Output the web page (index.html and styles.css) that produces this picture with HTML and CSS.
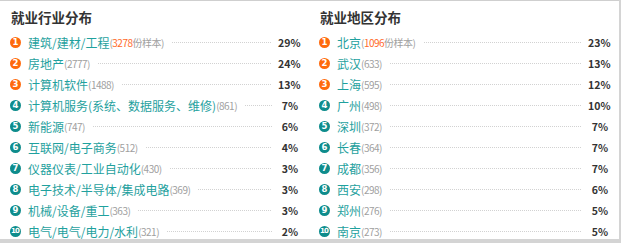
FILE: index.html
```html
<!DOCTYPE html>
<html lang="zh-CN">
<head>
<meta charset="utf-8">
<link rel="stylesheet" href="styles.css">
</head>
<body>
<div class="card">
  <section class="col">
    <h2 class="title">就业行业分布</h2>
    <ul class="list">
      <li class="row"><span class="num hot">1</span><span class="label">建筑/建材/工程</span><span class="count">(<em>3278</em>份样本)</span><span class="dots"></span><span class="pct">29%</span></li>
      <li class="row"><span class="num hot">2</span><span class="label">房地产</span><span class="count">(2777)</span><span class="dots"></span><span class="pct">24%</span></li>
      <li class="row"><span class="num hot">3</span><span class="label">计算机软件</span><span class="count">(1488)</span><span class="dots"></span><span class="pct">13%</span></li>
      <li class="row"><span class="num">4</span><span class="label">计算机服务(系统、数据服务、维修)</span><span class="count">(861)</span><span class="dots"></span><span class="pct">7%</span></li>
      <li class="row"><span class="num">5</span><span class="label">新能源</span><span class="count">(747)</span><span class="dots"></span><span class="pct">6%</span></li>
      <li class="row"><span class="num">6</span><span class="label">互联网/电子商务</span><span class="count">(512)</span><span class="dots"></span><span class="pct">4%</span></li>
      <li class="row"><span class="num">7</span><span class="label">仪器仪表/工业自动化</span><span class="count">(430)</span><span class="dots"></span><span class="pct">3%</span></li>
      <li class="row"><span class="num">8</span><span class="label">电子技术/半导体/集成电路</span><span class="count">(369)</span><span class="dots"></span><span class="pct">3%</span></li>
      <li class="row"><span class="num">9</span><span class="label">机械/设备/重工</span><span class="count">(363)</span><span class="dots"></span><span class="pct">3%</span></li>
      <li class="row"><span class="num small">10</span><span class="label">电气/电气/电力/水利</span><span class="count">(321)</span><span class="dots"></span><span class="pct">2%</span></li>
    </ul>
  </section>
  <section class="col">
    <h2 class="title">就业地区分布</h2>
    <ul class="list">
      <li class="row"><span class="num hot">1</span><span class="label">北京</span><span class="count">(<em>1096</em>份样本)</span><span class="dots"></span><span class="pct">23%</span></li>
      <li class="row"><span class="num hot">2</span><span class="label">武汉</span><span class="count">(633)</span><span class="dots"></span><span class="pct">13%</span></li>
      <li class="row"><span class="num hot">3</span><span class="label">上海</span><span class="count">(595)</span><span class="dots"></span><span class="pct">12%</span></li>
      <li class="row"><span class="num">4</span><span class="label">广州</span><span class="count">(498)</span><span class="dots"></span><span class="pct">10%</span></li>
      <li class="row"><span class="num">5</span><span class="label">深圳</span><span class="count">(372)</span><span class="dots"></span><span class="pct">7%</span></li>
      <li class="row"><span class="num">6</span><span class="label">长春</span><span class="count">(364)</span><span class="dots"></span><span class="pct">7%</span></li>
      <li class="row"><span class="num">7</span><span class="label">成都</span><span class="count">(356)</span><span class="dots"></span><span class="pct">7%</span></li>
      <li class="row"><span class="num">8</span><span class="label">西安</span><span class="count">(298)</span><span class="dots"></span><span class="pct">6%</span></li>
      <li class="row"><span class="num">9</span><span class="label">郑州</span><span class="count">(276)</span><span class="dots"></span><span class="pct">5%</span></li>
      <li class="row"><span class="num small">10</span><span class="label">南京</span><span class="count">(273)</span><span class="dots"></span><span class="pct">5%</span></li>
    </ul>
  </section>
</div>
</body>
</html>
```
FILE: styles.css
```css
html, body {
  margin: 0;
  padding: 0;
}
body {
  background: #d4d4d4;
  width: 621px;
  height: 243px;
  overflow: hidden;
  font-family: "Noto Sans CJK SC", "Noto Sans", sans-serif;
}
.card {
  display: flex;
  width: 619px;
  height: 238px;
  background: #fff;
  border-top: 1px solid #cfcfcf;
}
.col {
  width: 309px;
  box-sizing: border-box;
  padding: 6px 11px 0 10px;
}
.col + .col {
  width: 310px;
  padding-left: 10px;
}
.title {
  margin: 0 0 5px 1px;
  font-size: 13.5px;
  line-height: 20px;
  font-weight: bold;
  color: #333;
}
.list {
  list-style: none;
  margin: 0;
  padding: 0;
}
.row {
  display: flex;
  align-items: center;
  height: 21px;
  white-space: nowrap;
}
.num {
  flex: none;
  width: 11px;
  height: 11px;
  border-radius: 50%;
  background: #0e8c8c;
  color: #fff;
  font-family: "DejaVu Sans", sans-serif;
  font-weight: bold;
  font-size: 8.5px;
  line-height: 11px;
  text-align: center;
  margin-right: 7px;
}
.num.hot {
  background: #ff6a0d;
}
.num.small {
  font-size: 7px;
  letter-spacing: -0.8px;
  text-indent: -0.8px;
}
.label {
  font-size: 12px;
  color: #1fa19e;
  line-height: 21px;
}
.count {
  font-size: 10px;
  color: #a0a0a0;
  letter-spacing: -0.5px;
  line-height: 21px;
}
.count em {
  font-style: normal;
  color: #ff6a2a;
}
.dots {
  flex: 1;
  height: 1px;
  background: repeating-linear-gradient(to right, #d2d2d2 0 1px, transparent 1px 2px);
  margin: 0 6px 1px 8px;
}
.pct {
  flex: none;
  width: 20px;
  text-align: right;
  font-size: 10.5px;
  font-weight: bold;
  color: #333;
}
```
